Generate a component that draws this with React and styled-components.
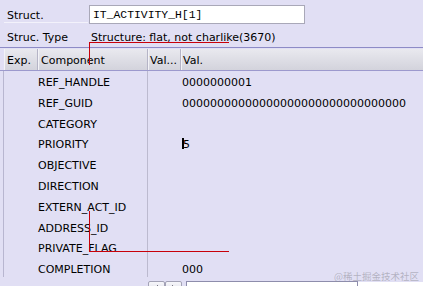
import React from 'react';
import styled, { createGlobalStyle } from 'styled-components';

const Global = createGlobalStyle`
  html, body { margin: 0; padding: 0; background: #e1dff4; }
  body { font-family: "DejaVu Sans", Verdana, sans-serif; font-size: 11px; color: #000; }
`;

const Screen = styled.div`
  position: relative;
  width: 423px;
  height: 286px;
  overflow: hidden;
  background: #e1dff4;
  display: flex;
  flex-direction: column;
`;

const Form = styled.div`
  display: flex;
  flex-direction: column;
  flex-shrink: 0;
  padding: 3px 0 0 4px;
`;

const FieldRow = styled.div`
  display: flex;
  align-items: flex-start;
  height: ${p => p.$h}px;
`;

const Label = styled.div`
  width: 84px;
  height: 20px;
  box-sizing: border-box;
  padding-left: 3px;
  padding-top: ${p => (p.$framed ? 3 : 4)}px;
  line-height: 20px;
  white-space: nowrap;
  border-bottom: ${p => (p.$framed ? '1px solid #f3f2fb' : 'none')};
`;

const Input = styled.div`
  margin-left: 1px;
  margin-top: 2px;
  width: 216px;
  height: 19px;
  box-sizing: border-box;
  background: #fff;
  border: 1px solid #a9a8b8;
  padding: 1px 0 0 3px;
  font-family: "Liberation Mono", "Courier New", monospace;
  font-size: 11.4px;
  line-height: 17px;
  white-space: nowrap;
`;

const Value = styled.div`
  padding: 4px 0 0 3px;
  line-height: 20px;
  white-space: nowrap;
`;

const Header = styled.div`
  display: grid;
  flex-shrink: 0;
  grid-template-columns: 34px 110px 33px 1fr;
  border-top: 1px solid #8d8bc6;
  border-bottom: 1px solid #9c99cd;
  padding: 1px 0 0 4px;
`;

const HeadCell = styled.div`
  height: 21px;
  box-sizing: border-box;
  padding: 2px 0 0 ${p => p.$pad}px;
  line-height: 19px;
  white-space: nowrap;
  overflow: hidden;
  background: linear-gradient(#e9e9ef, #d3d3dc);
  border-left: 1px solid #f3f3f7;
  border-right: ${p => (p.$last ? 'none' : '1px solid #b5b4c6')};
`;

const Body = styled.div`
  flex-shrink: 0;
  margin-left: 3px;
  border-left: 1px solid #b8b6d0;
  height: 206px;
  overflow: hidden;
`;

const Row = styled.div`
  display: grid;
  grid-template-columns: 34px 110px 33px 1fr;
  height: 20.8px;
`;

const Cell = styled.div`
  height: 20.8px;
  box-sizing: border-box;
  white-space: nowrap;
  padding: 3px 0 0 ${p => p.$pad || 0}px;
  line-height: 17.8px;
  border-right: ${p => (p.$sep ? '1px solid #bcbacf' : 'none')};
`;

const Caret = styled.span`
  display: inline-block;
  width: 2px;
  height: 11px;
  background: #000;
  vertical-align: -1px;
  margin-right: -1px;
`;

const ScrollRow = styled.div`
  display: flex;
  align-items: flex-start;
  flex: 1;
  min-height: 0;
  overflow: hidden;
  padding-top: 4px;
`;

const ScrollSpacer = styled.div`
  width: 148px;
`;

const ScrollButton = styled.div`
  width: 17px;
  height: 14px;
  box-sizing: border-box;
  border: 1px solid #a3a2b6;
  border-radius: 2px;
  background: linear-gradient(#f6f6fa, #dcdce6);
  display: flex;
  justify-content: center;
  padding-top: 3px;
`;

const Track = styled.div`
  margin-left: 4px;
  width: 172px;
  height: 14px;
  box-sizing: border-box;
  border: 1px solid #8e8dac;
  background: #fff;
`;

const Filler = styled.div`
  flex: 1;
  height: 14px;
  background: #fff;
  margin-top: 1px;
`;

const Mark = styled.div`
  position: absolute;
  left: ${p => p.$x}px;
  top: ${p => p.$y}px;
  width: ${p => p.$w}px;
  height: ${p => p.$h}px;
  border-left: 1px solid #c8000a;
  border-top: ${p => (p.$open === 'down' ? '1px solid #c8000a' : 'none')};
  border-bottom: ${p => (p.$open === 'up' ? '1px solid #c8000a' : 'none')};
  pointer-events: none;
`;

const Watermark = styled.div`
  position: absolute;
  right: 4px;
  bottom: 3px;
  font-family: "Noto Sans CJK SC", sans-serif;
  font-size: 9.5px;
  color: rgba(140, 140, 150, 0.55);
  white-space: nowrap;
`;

const rows = [
  ['REF_HANDLE', '0000000001'],
  ['REF_GUID', '00000000000000000000000000000000'],
  ['CATEGORY', ''],
  ['PRIORITY', 'caret'],
  ['OBJECTIVE', ''],
  ['DIRECTION', ''],
  ['EXTERN_ACT_ID', ''],
  ['ADDRESS_ID', ''],
  ['PRIVATE_FLAG', ''],
  ['COMPLETION', '000'],
];

const Arrow = ({ dir }) => (
  <svg width="5" height="7" viewBox="0 0 5 7">
    <path d={dir === 'left' ? 'M4 0 L0 3.5 L4 7 Z' : 'M1 0 L5 3.5 L1 7 Z'} fill="#202030" />
  </svg>
);

export default function App() {
  return (
    <>
      <Global />
      <Screen>
        <Form>
          <FieldRow $h={21}>
            <Label $framed>Struct.</Label>
            <Input>IT_ACTIVITY_H[1]</Input>
          </FieldRow>
          <FieldRow $h={23}>
            <Label>Struc. Type</Label>
            <Value>Structure: flat, not charlike(3670)</Value>
          </FieldRow>
        </Form>
        <Header>
          <HeadCell $pad={2}>Exp.</HeadCell>
          <HeadCell $pad={2}>Component</HeadCell>
          <HeadCell $pad={1}>Val...</HeadCell>
          <HeadCell $pad={1} $last>Val.</HeadCell>
        </Header>
        <Body>
          {rows.map(([name, val]) => (
            <Row key={name}>
              <Cell />
              <Cell $sep>{name}</Cell>
              <Cell />
              <Cell $pad={1}>
                {val === 'caret' ? (
                  <>
                    <Caret />5
                  </>
                ) : (
                  val
                )}
              </Cell>
            </Row>
          ))}
        </Body>
        <ScrollRow>
          <ScrollSpacer />
          <ScrollButton>
            <Arrow dir="left" />
          </ScrollButton>
          <ScrollButton>
            <Arrow dir="right" />
          </ScrollButton>
          <Track />
          <Filler />
        </ScrollRow>
        <Mark $x={89} $y={42} $w={139} $h={22} $open="down" />
        <Mark $x={89} $y={211} $w={139} $h={40} $open="up" />
        <Watermark>@稀土掘金技术社区</Watermark>
      </Screen>
    </>
  );
}
